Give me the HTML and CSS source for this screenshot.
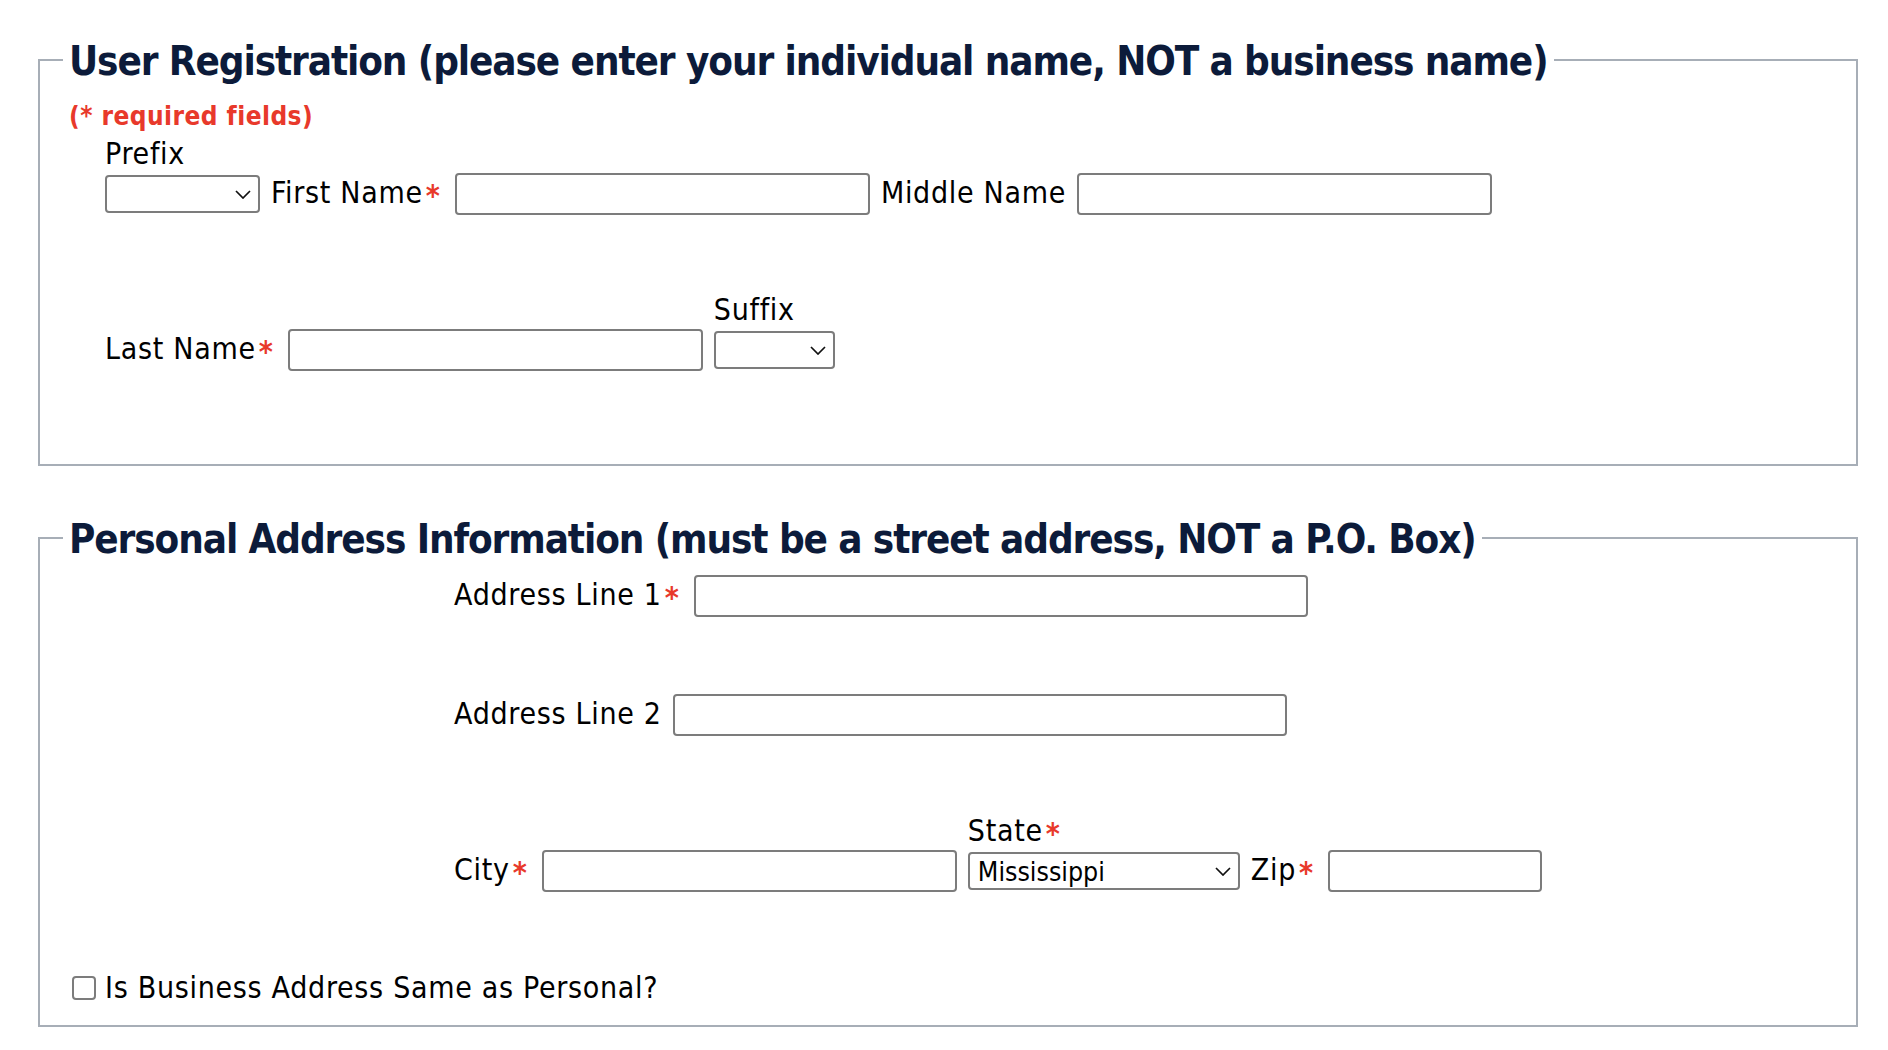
FILE: index.html
```html
<!DOCTYPE html>
<html lang="en">
<head>
<meta charset="utf-8">
<title>User Registration</title>
<link rel="stylesheet" href="styles.css">
</head>
<body>
<div class="page">
  <fieldset class="box box-user">
    <legend class="box-title">User Registration (please enter your individual name, NOT a business name)</legend>
    <div class="req">(* required fields)</div>
    <div class="row row-indent row-first">
      <div class="cell">
        <label class="cap">Prefix</label>
        <span class="sel w-prefix">
          <select><option></option></select>
          <svg class="chev" width="16" height="9" viewBox="0 0 16 9"><path d="M1 1 L8 8 L15 1"/></svg>
        </span>
      </div>
      <label class="lbl">First Name<span class="ast">*</span></label>
      <input class="txt w-name" type="text">
      <label class="lbl">Middle Name</label>
      <input class="txt w-name" type="text">
    </div>
    <div class="row row-indent row-next">
      <label class="lbl">Last Name<span class="ast">*</span></label>
      <input class="txt w-name" type="text">
      <div class="cell">
        <label class="cap">Suffix</label>
        <span class="sel w-suffix">
          <select><option></option></select>
          <svg class="chev" width="16" height="9" viewBox="0 0 16 9"><path d="M1 1 L8 8 L15 1"/></svg>
        </span>
      </div>
    </div>
  </fieldset>

  <fieldset class="box box-addr">
    <legend class="box-title">Personal Address Information (must be a street address, NOT a P.O. Box)</legend>
    <div class="row row-addr">
      <label class="lbl">Address Line 1<span class="ast">*</span></label>
      <input class="txt w-addr" type="text">
    </div>
    <div class="row row-addr row-next">
      <label class="lbl">Address Line 2</label>
      <input class="txt w-addr" type="text">
    </div>
    <div class="row row-addr row-next">
      <label class="lbl">City<span class="ast">*</span></label>
      <input class="txt w-name" type="text">
      <div class="cell">
        <label class="cap">State<span class="ast">*</span></label>
        <span class="sel w-state">
          <select><option>Mississippi</option></select>
          <svg class="chev" width="16" height="9" viewBox="0 0 16 9"><path d="M1 1 L8 8 L15 1"/></svg>
        </span>
      </div>
      <label class="lbl">Zip<span class="ast">*</span></label>
      <input class="txt w-zip" type="text">
    </div>
    <div class="check-row">
      <input class="chk" type="checkbox" id="same">
      <label class="chk-lbl" for="same">Is Business Address Same as Personal?</label>
    </div>
  </fieldset>
</div>
</body>
</html>
```

FILE: styles.css
```css
html, body {
  margin: 0;
  padding: 0;
  background: #ffffff;
}

body {
  font-family: "DejaVu Sans Condensed", "DejaVu Sans", sans-serif;
  font-stretch: condensed;
  color: #000000;
}

.page {
  padding: 34px 30px 0 38px;
}

.box {
  margin: 0;
  min-width: 0;
  border: 2px solid #a7aeb7;
  padding: 16px 20px 93px 29px;
}

.box-addr {
  margin-top: 46px;
  padding-top: 12px;
  padding-bottom: 19px;
}

.box-title {
  font-size: 40px;
  font-weight: bold;
  line-height: 47px;
  letter-spacing: -1.1px;
  color: #0c1b3a;
  padding: 4px 6px 0;
  margin-left: -6px;
  white-space: nowrap;
}

.req {
  font-size: 26px;
  font-weight: bold;
  line-height: 30px;
  letter-spacing: 0.45px;
  color: #e8392b;
}

.row {
  display: flex;
  align-items: flex-end;
  gap: 11px;
}

.row-indent {
  margin-left: 36px;
}

.row-first {
  margin-top: 5px;
}

.row-next {
  margin-top: 77px;
}

.row-addr {
  margin-left: 385px;
}

.cell {
  display: flex;
  flex-direction: column;
  align-items: flex-start;
}

.cap {
  font-size: 30px;
  line-height: 36px;
  letter-spacing: 0.7px;
  white-space: nowrap;
}

.lbl {
  font-size: 30px;
  line-height: 40px;
  letter-spacing: 0.7px;
  margin-bottom: 2px;
  white-space: nowrap;
}

.ast {
  color: #e8392b;
  font-weight: bold;
  line-height: 0;
  letter-spacing: 0;
  margin-left: 3px;
  margin-right: 4px;
  vertical-align: -3px;
}

.txt {
  box-sizing: border-box;
  height: 42px;
  border: 2px solid #7c7c7c;
  border-radius: 4px;
  background: #ffffff;
  padding: 0 8px;
  font-family: inherit;
  font-size: 26px;
  margin: 0;
}

.w-name { width: 415px; }
.w-addr { width: 614px; }
.w-zip { width: 214px; }

.sel {
  position: relative;
  display: block;
  margin-top: 3px;
  margin-bottom: 2px;
}

.sel select {
  -webkit-appearance: none;
  appearance: none;
  box-sizing: border-box;
  display: block;
  width: 100%;
  height: 38px;
  margin: 0;
  border: 2px solid #7c7c7c;
  border-radius: 4px;
  background: #ffffff;
  padding: 0 30px 0 8px;
  font-family: inherit;
  font-stretch: condensed;
  font-size: 26.5px;
  color: #000000;
}

.w-prefix { width: 155px; }
.w-suffix { width: 121px; }
.w-state { width: 272px; }

.chev {
  position: absolute;
  right: 9px;
  top: 15px;
  fill: none;
  stroke: #111111;
  stroke-width: 1.7;
  pointer-events: none;
}

.check-row {
  display: flex;
  align-items: center;
  margin-top: 78px;
}

.chk {
  -webkit-appearance: none;
  appearance: none;
  box-sizing: border-box;
  width: 24px;
  height: 24px;
  margin: 0 9px 0 3px;
  border: 2px solid #7c7c7c;
  border-radius: 4px;
  background: #ffffff;
}

.chk-lbl {
  font-size: 30px;
  line-height: 36px;
  letter-spacing: 0.7px;
}
```
